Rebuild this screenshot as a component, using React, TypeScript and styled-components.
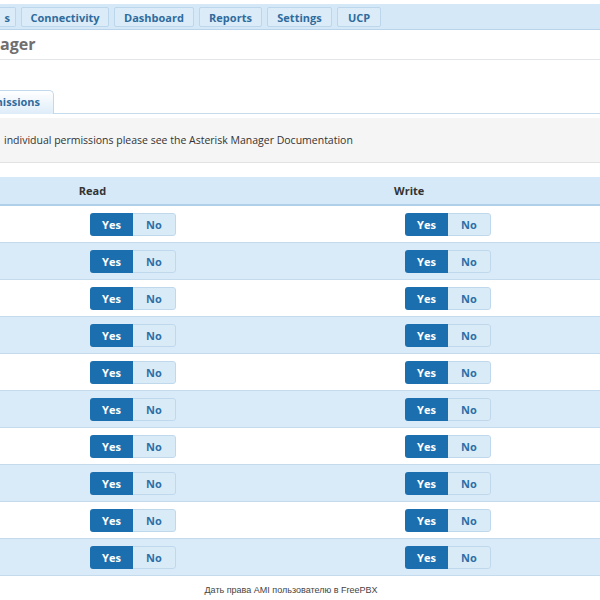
import styled, { createGlobalStyle } from "styled-components"

const GlobalStyle = createGlobalStyle`
  html, body {
    margin: 0;
    padding: 0;
    background: #ffffff;
    font-family: "Open Sans", "Noto Sans", sans-serif;
  }
`

const NAV_TABS = [
  { label: "s", width: 16 },
  { label: "Connectivity", width: 88 },
  { label: "Dashboard", width: 80 },
  { label: "Reports", width: 63 },
  { label: "Settings", width: 65 },
  { label: "UCP", width: 44 },
]

const ROW_COUNT = 10

const Page = styled.div`
  width: 600px;
  height: 600px;
  overflow: hidden;
  display: flex;
  flex-direction: column;
`

const TopNav = styled.nav`
  margin-top: 4px;
  height: 26px;
  background: #d5e8f7;
  border-bottom: 1px solid #b8d3ea;
  display: flex;
  align-items: center;
  gap: 5px;
  box-sizing: border-box;
  padding-top: 1px;
`

const NavTab = styled.div<{ $w: number; $first?: boolean }>`
  width: ${(p) => p.$w}px;
  height: 20px;
  box-sizing: border-box;
  background: #dbebf8;
  border: 1px solid #bcd6ec;
  border-left-width: ${(p) => (p.$first ? 0 : 1)}px;
  border-radius: ${(p) => (p.$first ? "0 2px 2px 0" : "2px")};
  color: #2f6b9d;
  font-size: 11px;
  font-weight: 700;
  display: flex;
  align-items: center;
  justify-content: ${(p) => (p.$first ? "flex-end" : "center")};
  padding-right: ${(p) => (p.$first ? 5 : 0)}px;
`

const TitleBar = styled.div`
  height: 29px;
  border-bottom: 1px solid #e3e6e8;
  display: flex;
  align-items: center;
`

const Title = styled.h1`
  margin: 0;
  font-size: 16px;
  font-weight: 700;
  color: #6f6f6f;
  line-height: 1;
  padding-bottom: 2px;
`

const TabStrip = styled.div`
  margin-top: 29px;
  height: 24px;
  display: flex;
  align-items: flex-end;
  border-bottom: 1px solid #c6dbec;
`

const ActiveTab = styled.div`
  width: 54px;
  height: 24px;
  box-sizing: border-box;
  margin-bottom: -1px;
  border: 1px solid #c2d9ec;
  border-left: none;
  border-bottom: none;
  border-radius: 0 5px 0 0;
  background: linear-gradient(#ffffff, #deedf9);
  color: #2f6b9d;
  font-size: 11px;
  font-weight: 700;
  display: flex;
  align-items: center;
  justify-content: flex-end;
  padding: 0 13px 2px 0;
  white-space: nowrap;
`

const InfoBox = styled.div`
  margin-top: 4px;
  height: 45px;
  box-sizing: border-box;
  background: #f5f5f5;
  border-bottom: 1px solid #e2e2e2;
  display: flex;
  align-items: center;
  padding: 0 0 0 4px;
  font-size: 10.5px;
  color: #333333;
`

const Table = styled.div`
  margin-top: 14px;
  display: grid;
  grid-template-columns: 185px 315px 1fr;
`

const HeaderCell = styled.div<{ $pad: number }>`
  height: 29px;
  box-sizing: border-box;
  background: #d6e9f8;
  border-bottom: 2px solid #b0cfe8;
  display: flex;
  align-items: center;
  padding-left: ${(p) => p.$pad}px;
  justify-content: ${(p) => (p.$pad ? "flex-start" : "center")};
  font-size: 11px;
  font-weight: 700;
  color: #333333;
`

const Cell = styled.div<{ $alt: boolean; $pad: number }>`
  height: 37px;
  box-sizing: border-box;
  background: ${(p) => (p.$alt ? "#d9eaf8" : "#ffffff")};
  border-bottom: 1px solid #c4dbee;
  display: flex;
  align-items: center;
  padding-left: ${(p) => p.$pad}px;
`

const Toggle = styled.div`
  display: flex;
  height: 23px;
  border-radius: 3px;
  overflow: hidden;
`

const YesBtn = styled.div`
  width: 43px;
  background: #1c6fae;
  color: #ffffff;
  font-size: 11px;
  font-weight: 700;
  display: flex;
  align-items: center;
  justify-content: center;
`

const NoBtn = styled.div`
  width: 43px;
  box-sizing: border-box;
  background: #daebf8;
  border: 1px solid #c0d8ec;
  border-left: none;
  border-radius: 0 3px 3px 0;
  color: #2d6fa6;
  font-size: 11px;
  font-weight: 700;
  display: flex;
  align-items: center;
  justify-content: center;
`

const Caption = styled.div`
  margin-top: 9px;
  padding-right: 18px;
  text-align: center;
  font-family: "Liberation Sans", Arial, sans-serif;
  font-size: 9px;
  color: #444444;
`

function YesNo() {
  return (
    <Toggle>
      <YesBtn>Yes</YesBtn>
      <NoBtn>No</NoBtn>
    </Toggle>
  )
}

export default function App() {
  const rows = Array.from({ length: ROW_COUNT }, (_, i) => i)

  return (
    <>
      <GlobalStyle />
      <Page>
        <TopNav>
          {NAV_TABS.map((tab, i) => (
            <NavTab key={tab.label} $w={tab.width} $first={i === 0}>
              {tab.label}
            </NavTab>
          ))}
        </TopNav>
        <TitleBar>
          <Title>ager</Title>
        </TitleBar>
        <TabStrip>
          <ActiveTab>missions</ActiveTab>
        </TabStrip>
        <InfoBox>
          individual permissions please see the Asterisk Manager Documentation
        </InfoBox>
        <Table>
          <HeaderCell $pad={0}>Read</HeaderCell>
          <HeaderCell $pad={209}>Write</HeaderCell>
          <HeaderCell $pad={0} />
          {rows.map((i) => (
            <>
              <Cell key={`r${i}`} $alt={i % 2 === 1} $pad={90}>
                <YesNo />
              </Cell>
              <Cell key={`w${i}`} $alt={i % 2 === 1} $pad={220}>
                <YesNo />
              </Cell>
              <Cell key={`e${i}`} $alt={i % 2 === 1} $pad={0} />
            </>
          ))}
        </Table>
        <Caption>Дать права AMI пользователю в FreePBX</Caption>
      </Page>
    </>
  )
}
